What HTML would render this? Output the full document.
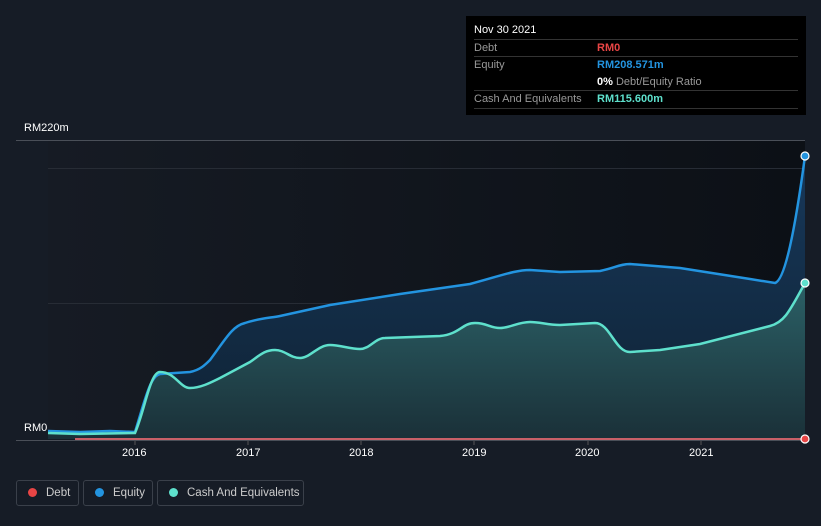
<!DOCTYPE html>
<html><head><meta charset="utf-8"><style>
html,body{margin:0;width:821px;height:526px;overflow:hidden}
body{background:#161c26;font-family:"Liberation Sans",sans-serif;position:relative}
.t{position:absolute;color:#fff;font-size:11px}
.tip{position:absolute;left:466px;top:16px;width:340px;height:99px;background:#000}
.tip .r{position:absolute;left:8px;width:324px;font-size:11px;color:#999}
.leg{position:absolute;top:480px;height:26px;border:1px solid #3a404a;border-radius:3px;color:#ccc;font-size:11.5px;line-height:24px;box-sizing:border-box;white-space:nowrap;overflow:hidden}
.leg i{display:inline-block;width:9px;height:9px;border-radius:50%;margin:0 9px 0 11px;vertical-align:-1px}
</style></head><body>
<svg width="821" height="526" style="position:absolute;left:0;top:0">
<defs>
<linearGradient id="bg" x1="0" x2="1"><stop offset="0" stop-color="#161b24"/><stop offset="1" stop-color="#0c1016"/></linearGradient>
<linearGradient id="eq" x1="0" y1="0" x2="0" y2="1"><stop offset="0" stop-color="#17385a"/><stop offset="1" stop-color="#0f2234"/></linearGradient>
<linearGradient id="ca" x1="0" y1="0" x2="0" y2="1"><stop offset="0" stop-color="#2b6066"/><stop offset="1" stop-color="#1a3038"/></linearGradient>
</defs>
<rect x="48" y="140" width="757" height="299" fill="url(#bg)"/>
<line x1="16" y1="140.5" x2="805" y2="140.5" stroke="#4a4f58"/>
<line x1="48" y1="168.5" x2="805" y2="168.5" stroke="#272c35"/>
<line x1="48" y1="303.5" x2="805" y2="303.5" stroke="#272c35"/>
<path d="M48,431 L80,432 L110,431 L135,432 C145,400 150,376 160,374 L190,372 C200,370 205,365 210,360 C225,340 232,326 245,323 C260,318 270,318 280,316 L330,305 L400,294 L470,284 C500,276 515,270 530,270 L560,272 L600,271 C615,268 620,264 630,264 L680,268 L750,279 L775,283 C785,280 795,230 805,156 L805,439 L48,439Z" fill="url(#eq)"/>
<path d="M48,433 L80,434 L135,433 C145,410 150,372 160,372 C175,372 180,388 190,388 C200,388 210,383 220,378 L250,362 C260,355 265,350 275,350 C285,350 290,358 300,358 C310,358 318,345 330,345 C340,345 350,349 360,349 C370,349 375,338 385,338 L440,336 C460,334 462,323 475,323 C487,323 490,328 500,328 C510,328 518,322 530,322 C540,322 548,325 560,325 L595,323 C610,323 615,352 630,352 L660,350 L700,344 L770,326 C785,322 790,310 805,283 L805,439 L48,439Z" fill="url(#ca)"/>
<path d="M48,431 L80,432 L110,431 L135,432 C145,400 150,376 160,374 L190,372 C200,370 205,365 210,360 C225,340 232,326 245,323 C260,318 270,318 280,316 L330,305 L400,294 L470,284 C500,276 515,270 530,270 L560,272 L600,271 C615,268 620,264 630,264 L680,268 L750,279 L775,283 C785,280 795,230 805,156" fill="none" stroke="#2394e0" stroke-width="2.5"/>
<path d="M48,433 L80,434 L135,433 C145,410 150,372 160,372 C175,372 180,388 190,388 C200,388 210,383 220,378 L250,362 C260,355 265,350 275,350 C285,350 290,358 300,358 C310,358 318,345 330,345 C340,345 350,349 360,349 C370,349 375,338 385,338 L440,336 C460,334 462,323 475,323 C487,323 490,328 500,328 C510,328 518,322 530,322 C540,322 548,325 560,325 L595,323 C610,323 615,352 630,352 L660,350 L700,344 L770,326 C785,322 790,310 805,283" fill="none" stroke="#5ee0cc" stroke-width="2.5"/>
<line x1="16" y1="440.5" x2="805" y2="440.5" stroke="#4a4f58"/>
<line x1="75" y1="439" x2="805" y2="439" stroke="#c86068" stroke-width="2"/>
<circle cx="805" cy="156" r="4" fill="#2394e0" stroke="#fff" stroke-width="1.2"/>
<circle cx="805" cy="283" r="4" fill="#5ee0cc" stroke="#fff" stroke-width="1.2"/>
<circle cx="805" cy="439" r="4" fill="#e84545" stroke="#fff" stroke-width="1.2"/>
<g stroke="#555" ><line x1="135" y1="441" x2="135" y2="445"/><line x1="248" y1="441" x2="248" y2="445"/><line x1="361" y1="441" x2="361" y2="445"/><line x1="474" y1="441" x2="474" y2="445"/><line x1="588" y1="441" x2="588" y2="445"/><line x1="701" y1="441" x2="701" y2="445"/></g>
</svg>
<div class="t" style="left:24px;top:122px">RM220m</div>
<div class="t" style="left:24px;top:422px">RM0</div>
<div class="t" style="left:122px;top:447px">2016</div>
<div class="t" style="left:236px;top:447px">2017</div>
<div class="t" style="left:349px;top:447px">2018</div>
<div class="t" style="left:462px;top:447px">2019</div>
<div class="t" style="left:575px;top:447px">2020</div>
<div class="t" style="left:689px;top:447px">2021</div>
<div class="tip">
<div class="r" style="top:8px;color:#fff">Nov 30 2021</div>
<div class="r" style="top:23px;border-top:1px solid #333;padding-top:2px">Debt<span style="position:absolute;left:123px;color:#e84545;font-weight:bold">RM0</span></div>
<div class="r" style="top:40px;border-top:1px solid #333;padding-top:2px">Equity<span style="position:absolute;left:123px;color:#2394e0;font-weight:bold">RM208.571m</span></div>
<div class="r" style="top:58px;padding-top:2px"><span style="position:absolute;left:123px;white-space:nowrap"><b style="color:#fff">0%</b> Debt/Equity Ratio</span></div>
<div class="r" style="top:74px;border-top:1px solid #333;border-bottom:1px solid #333;padding:2px 0 3px">Cash And Equivalents<span style="position:absolute;left:123px;color:#5ee0cc;font-weight:bold">RM115.600m</span></div>
</div>
<div class="leg" style="left:16px;width:63px"><i style="background:#e84545"></i>Debt</div>
<div class="leg" style="left:83px;width:70px"><i style="background:#2394e0"></i>Equity</div>
<div class="leg" style="left:157px;width:147px"><i style="background:#5ee0cc"></i>Cash And Equivalents</div>
</body></html>
